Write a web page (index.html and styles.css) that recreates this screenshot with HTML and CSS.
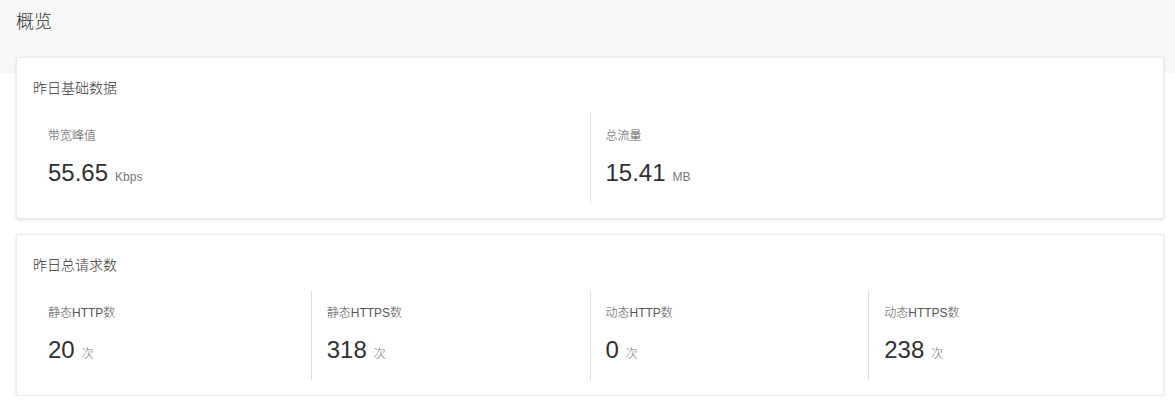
FILE: index.html
```html
<!DOCTYPE html>
<html lang="zh-CN">
<head>
<meta charset="utf-8">
<title>概览</title>
<link rel="stylesheet" href="styles.css">
</head>
<body>
<div class="page">
  <header class="page-header">
    <h1 class="page-title">概览</h1>
  </header>
  <main class="content">
    <section class="card">
      <h2 class="card-title">昨日基础数据</h2>
      <div class="stats">
        <div class="stat">
          <div class="stat-label">带宽峰值</div>
          <div class="stat-value">55.65<span class="stat-unit">Kbps</span></div>
        </div>
        <div class="stat">
          <div class="stat-label">总流量</div>
          <div class="stat-value">15.41<span class="stat-unit">MB</span></div>
        </div>
      </div>
    </section>
    <section class="card">
      <h2 class="card-title">昨日总请求数</h2>
      <div class="stats">
        <div class="stat">
          <div class="stat-label">静态HTTP数</div>
          <div class="stat-value">20<span class="stat-unit">次</span></div>
        </div>
        <div class="stat">
          <div class="stat-label">静态HTTPS数</div>
          <div class="stat-value">318<span class="stat-unit">次</span></div>
        </div>
        <div class="stat">
          <div class="stat-label">动态HTTP数</div>
          <div class="stat-value">0<span class="stat-unit">次</span></div>
        </div>
        <div class="stat">
          <div class="stat-label">动态HTTPS数</div>
          <div class="stat-value">238<span class="stat-unit">次</span></div>
        </div>
      </div>
    </section>
  </main>
</div>
</body>
</html>
```

FILE: styles.css
```css
* { box-sizing: border-box; }

html, body {
  margin: 0;
  padding: 0;
  background: #ffffff;
  font-family: "Liberation Sans", "Noto Sans CJK SC", sans-serif;
  color: #333333;
}

.page-header {
  background: #f8f8f8;
  height: 73px;
  padding: 10px 16px 0;
}

.page-title {
  margin: 0;
  font-size: 18px;
  font-weight: 300;
  line-height: 24px;
  color: #333333;
}

.content {
  margin-top: -16px;
  padding: 0 11px 0 16px;
  display: flex;
  flex-direction: column;
  gap: 15px;
}

.card {
  background: #ffffff;
  border: 1px solid #ebebeb;
  box-shadow: 0 1px 3px rgba(0, 0, 0, 0.12);
  padding: 19px 16px 15px;
}

.card-title {
  margin: 0;
  font-size: 14px;
  font-weight: 300;
  line-height: 22px;
  color: #333333;
}

.stats {
  margin-top: 15px;
  display: flex;
}

.stat {
  flex: 1 1 0;
  height: 89px;
  padding: 13px 15px 0;
  border-left: 1px solid #dddddd;
}

.stat:first-child {
  border-left: none;
}

.stat-label {
  font-size: 12px;
  font-weight: 300;
  line-height: 18px;
  color: #555555;
}

.stat-value {
  margin-top: 13px;
  font-size: 24px;
  line-height: 30px;
  color: #2e3033;
}

.stat-unit {
  margin-left: 7px;
  font-size: 12px;
  font-weight: 300;
  color: #777777;
}
```
